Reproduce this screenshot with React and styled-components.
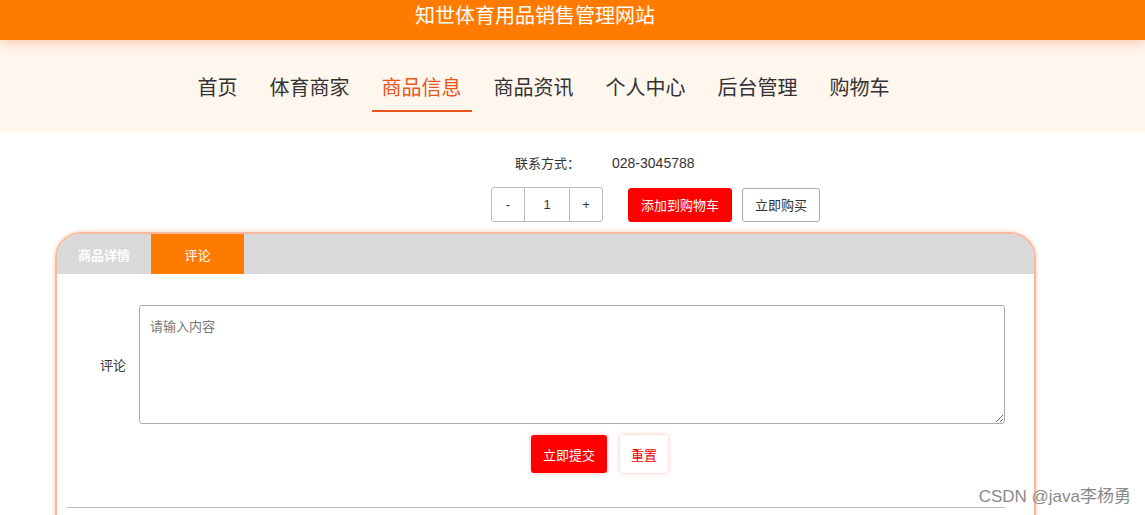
import React from 'react';
import styled, { createGlobalStyle } from 'styled-components';

const GlobalStyle = createGlobalStyle`
  html, body {
    margin: 0;
    padding: 0;
    background: #fff;
    font-family: "Liberation Sans", "Noto Sans CJK SC", sans-serif;
    overflow: hidden;
  }
`;

const Page = styled.div`
  position: relative;
  width: 1145px;
  height: 515px;
  overflow: hidden;
`;

const TopBar = styled.header`
  height: 40px;
  background-color: #ff7b00;
  color: #fff;
  display: flex;
  justify-content: center;
  padding-right: 75px;
  position: relative;
  z-index: 1;
  box-shadow: 0 2px 12px rgba(240, 130, 80, 0.45);
`;

const Title = styled.h1`
  margin: 0;
  margin-top: 2px;
  font-size: 20px;
  font-weight: normal;
  line-height: 26px;
  font-family: "Noto Sans CJK SC", sans-serif;
`;

const NavWrap = styled.div`
  height: 93px;
  background-color: #fff6ee;
  display: flex;
  justify-content: center;
  padding-right: 58px;
  box-sizing: border-box;
  padding-top: 32px;
`;

const NavList = styled.nav`
  display: flex;
  gap: 12px;
  height: 40px;
`;

const NavItem = styled.a`
  padding: 0 10px;
  font-size: 20px;
  line-height: 30px;
  height: 40px;
  box-sizing: border-box;
  color: ${p => (p.$active ? '#e8561c' : '#333')};
  border-bottom: 2px solid ${p => (p.$active ? '#e8561c' : 'transparent')};
  font-family: "Noto Sans CJK SC", sans-serif;
  cursor: pointer;
`;

const Info = styled.div`
  display: flex;
  flex-direction: column;
  align-items: flex-start;
  padding-left: 491px;
  padding-top: 21px;
`;

const ContactRow = styled.div`
  display: flex;
  align-items: baseline;
  font-size: 13px;
  color: #333;
  line-height: 18px;
  padding-left: 24px;
`;

const ContactLabel = styled.span`
  width: 97px;
`;

const Phone = styled.span`
  font-size: 14px;
`;

const BuyRow = styled.div`
  display: flex;
  align-items: center;
  margin-top: 14px;
`;

const Counter = styled.div`
  display: flex;
  height: 35px;
  border: 1px solid #bbb;
  border-radius: 3px;
  box-sizing: border-box;
  margin-right: 25px;
`;

const CountCell = styled.span`
  width: ${p => p.$w}px;
  display: flex;
  align-items: center;
  justify-content: center;
  font-size: 13px;
  color: #333;
  border-left: ${p => (p.$divider ? '1px solid #bbb' : 'none')};
`;

const Btn = styled.button`
  height: ${p => p.$h || 34}px;
  padding: 0 ${p => p.$px || 12}px;
  font-size: 13px;
  font-family: "Noto Sans CJK SC", sans-serif;
  border-radius: 3px;
  cursor: pointer;
  margin-right: ${p => p.$mr || 0}px;
  background: ${p => (p.$primary ? '#ff0000' : '#fff')};
  color: ${p => (p.$primary ? '#fff' : p.$red ? '#e00' : '#333')};
  border: ${p => (p.$glow ? 'none' : p.$primary ? '1px solid #ff0000' : '1px solid #aaa')};
  box-shadow: ${p => (p.$glow ? '0 0 4px rgba(255, 60, 60, 0.35)' : 'none')};
`;

const Card = styled.section`
  margin: 10px 0 0 55px;
  width: 981px;
  height: 320px;
  box-sizing: border-box;
  border: 2px solid #f9b9a0;
  border-radius: 26px 26px 0 0;
  box-shadow: 0 0 4px rgba(250, 150, 110, 0.55);
  overflow: hidden;
`;

const TabBar = styled.div`
  display: flex;
  height: 40px;
  background-color: #d9d9d9;
`;

const Tab = styled.div`
  width: ${p => p.$w}px;
  display: flex;
  align-items: center;
  justify-content: center;
  color: #fff;
  font-size: 13px;
  font-family: "Noto Sans CJK SC", sans-serif;
  background: ${p => (p.$active ? '#ff7b00' : 'transparent')};
  font-weight: ${p => (p.$active ? 'normal' : 'bold')};
`;

const Form = styled.div`
  padding: 31px 29px 0 0;
`;

const FieldRow = styled.div`
  display: flex;
  align-items: center;
`;

const Label = styled.label`
  width: 69px;
  padding-right: 13px;
  text-align: right;
  font-size: 13px;
  color: #333;
  font-family: "Noto Sans CJK SC", sans-serif;
`;

const TextArea = styled.textarea`
  flex: 1;
  height: 119px;
  box-sizing: border-box;
  border: 1px solid #aaa;
  border-radius: 3px;
  padding: 10px;
  font-size: 13px;
  font-family: "Noto Sans CJK SC", sans-serif;
  resize: vertical;
  &::placeholder {
    color: #777;
  }
`;

const Actions = styled.div`
  display: flex;
  justify-content: center;
  padding-left: 137px;
  margin-top: 11px;
  gap: 13px;
`;

const Divider = styled.hr`
  margin: 34px 0 0 10px;
  border: none;
  border-top: 1px solid #bbb;
`;

const Watermark = styled.div`
  position: absolute;
  right: 14px;
  bottom: 8px;
  font-size: 17px;
  color: #8a8a8a;
  font-family: "Liberation Sans", "Noto Sans CJK SC", sans-serif;
`;

const navs = ['首页', '体育商家', '商品信息', '商品资讯', '个人中心', '后台管理', '购物车'];

export default function App() {
  return (
    <Page>
      <GlobalStyle />
      <TopBar>
        <Title>知世体育用品销售管理网站</Title>
      </TopBar>
      <NavWrap>
        <NavList>
          {navs.map(n => (
            <NavItem key={n} $active={n === '商品信息'}>{n}</NavItem>
          ))}
        </NavList>
      </NavWrap>
      <Info>
        <ContactRow>
          <ContactLabel>联系方式：</ContactLabel>
          <Phone>028-3045788</Phone>
        </ContactRow>
        <BuyRow>
          <Counter>
            <CountCell $w={32}>-</CountCell>
            <CountCell $w={44} $divider>1</CountCell>
            <CountCell $w={32} $divider>+</CountCell>
          </Counter>
          <Btn $primary $mr={10}>添加到购物车</Btn>
          <Btn>立即购买</Btn>
        </BuyRow>
      </Info>
      <Card>
        <TabBar>
          <Tab $w={94}>商品详情</Tab>
          <Tab $w={93} $active>评论</Tab>
        </TabBar>
        <Form>
          <FieldRow>
            <Label>评论</Label>
            <TextArea placeholder="请输入内容" />
          </FieldRow>
          <Actions>
            <Btn $primary $glow $h={38} $px={12}>立即提交</Btn>
            <Btn $glow $red $h={38} $px={11}>重置</Btn>
          </Actions>
          <Divider />
        </Form>
      </Card>
      <Watermark>CSDN @java李杨勇</Watermark>
    </Page>
  );
}
